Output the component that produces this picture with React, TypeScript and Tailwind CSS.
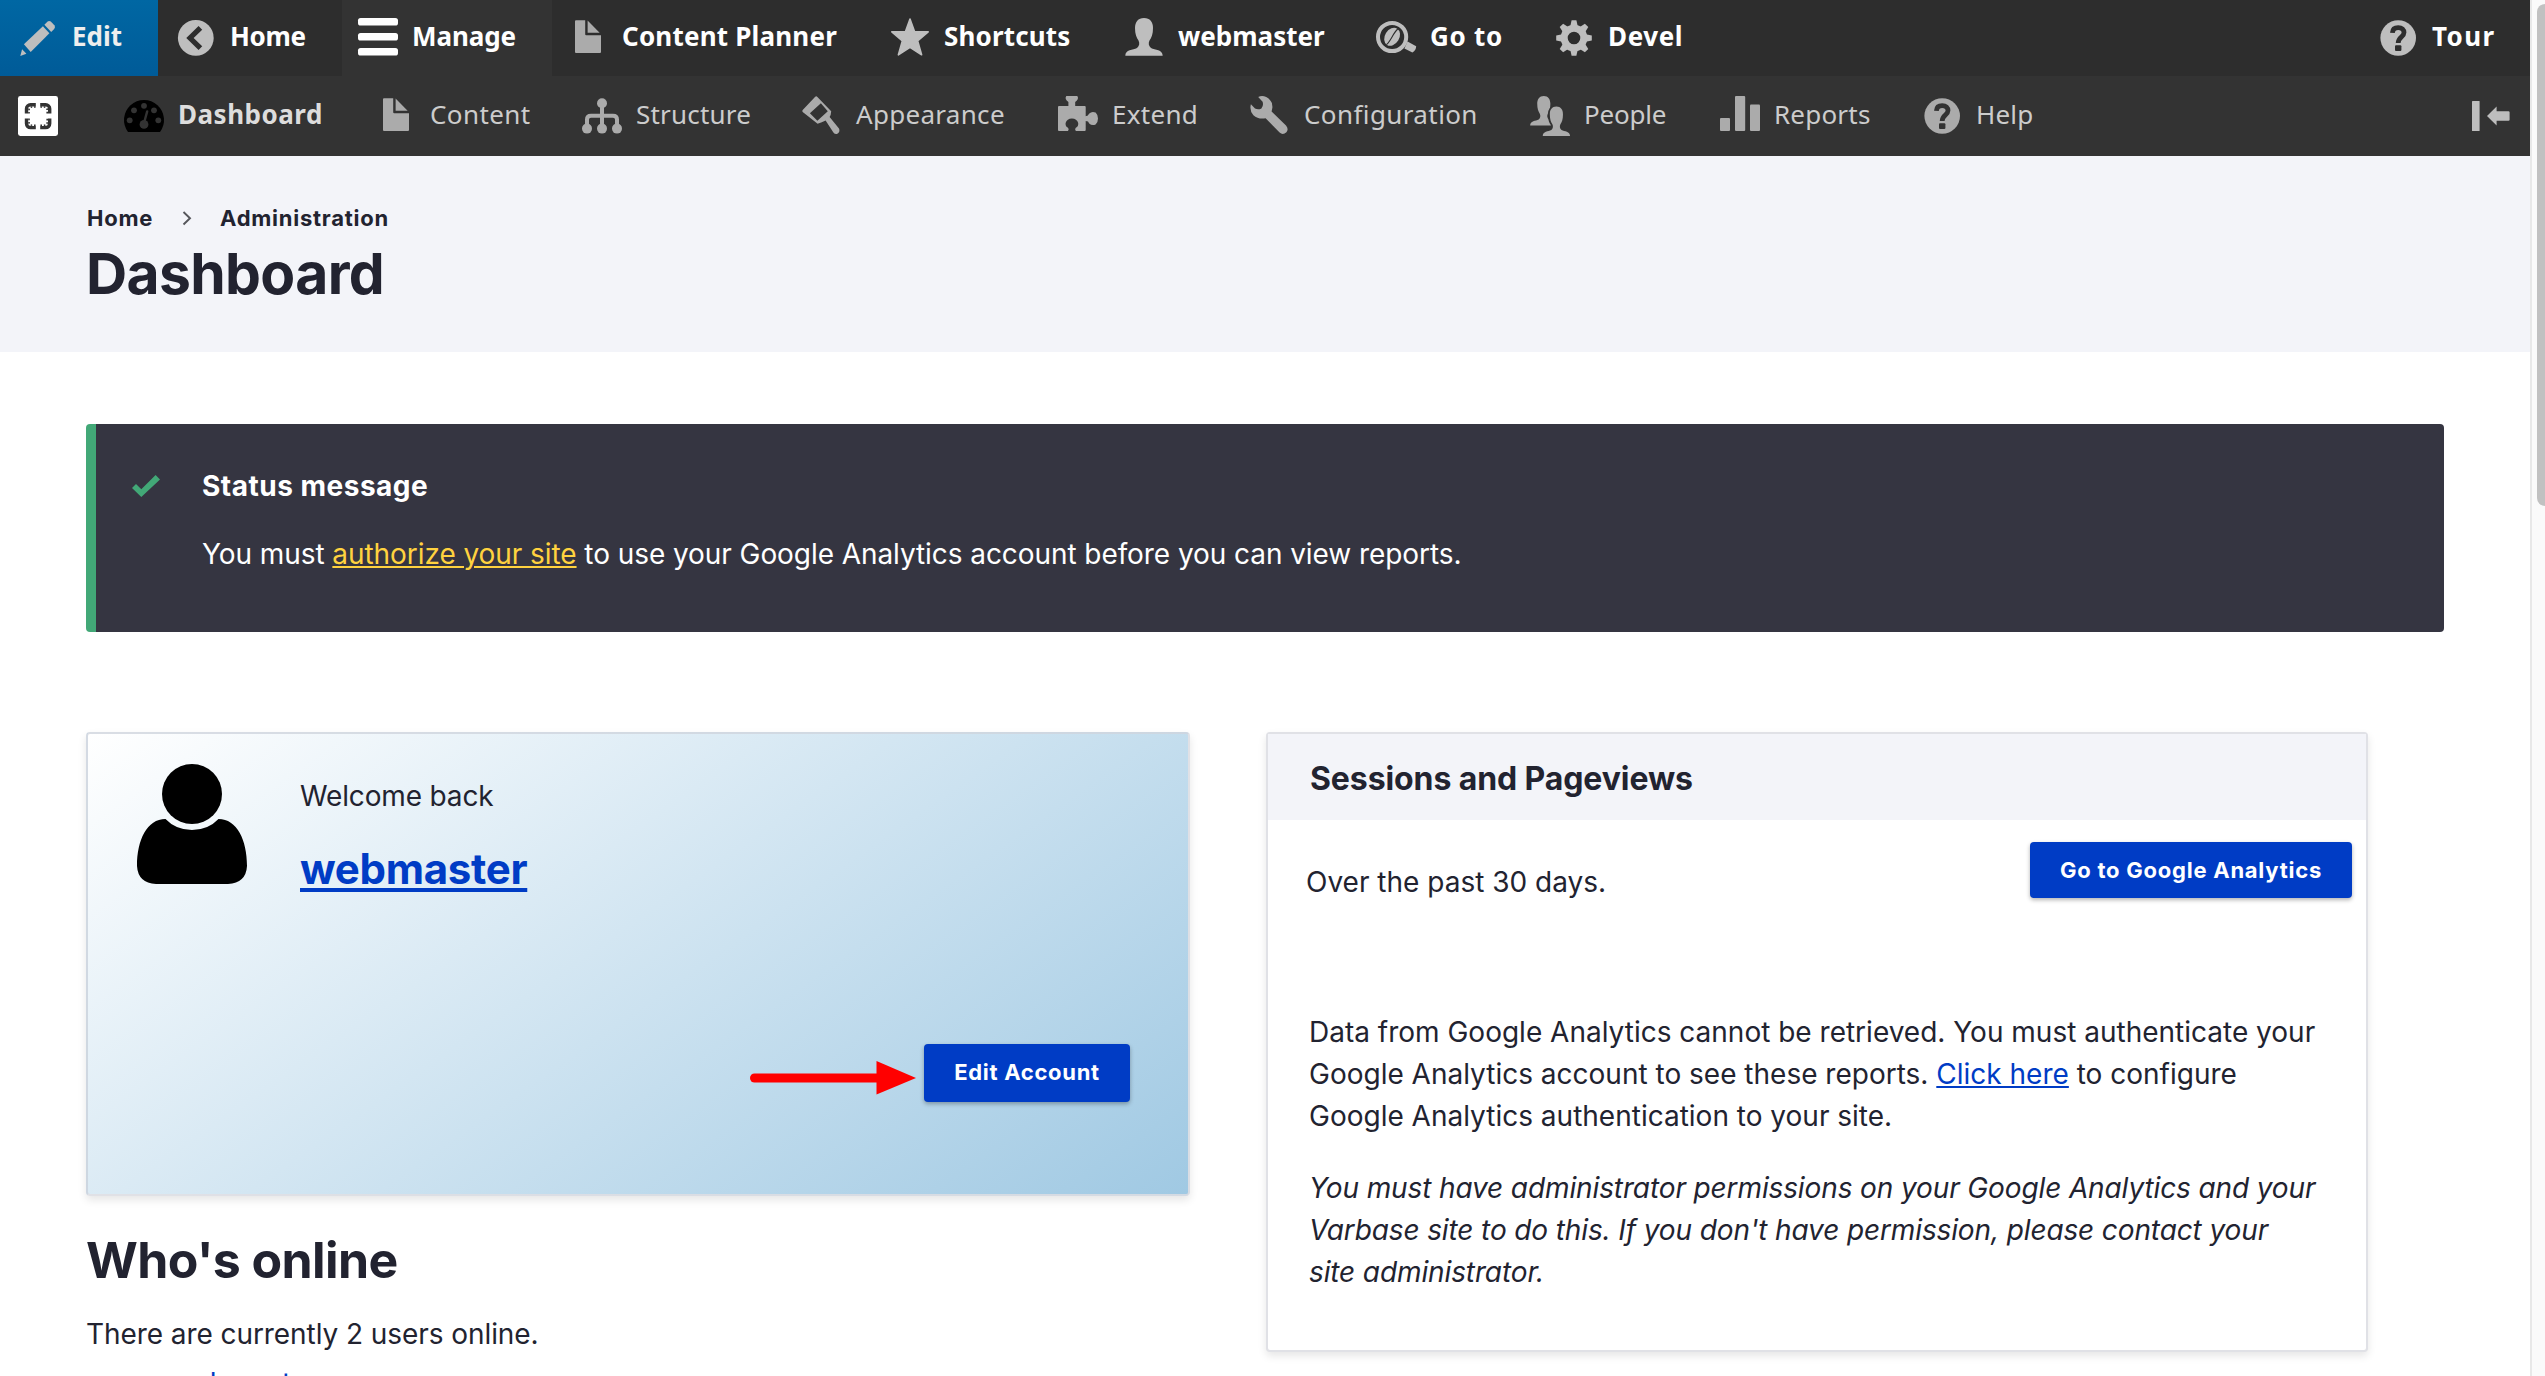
import type { ReactNode } from "react";

const PERSON =
  "M20 0C14 0 11 4 11 10C11 16 12.5 20 14.5 22.5C15.8 25 15.5 28 13 30C9 32 1.3 31.5 1.3 37.7H38.7C38.7 31.5 31 32 27 30C24.5 28 24.2 25 25.5 22.5C27.5 20 29 16 29 10C29 4 26 0 20 0Z";

function Icon({ children, className = "text-[#bebebe]" }: { children: ReactNode; className?: string }) {
  return (
    <svg viewBox="0 0 40 40" fill="currentColor" className={`h-10 w-10 shrink-0 overflow-visible ${className}`}>
      {children}
    </svg>
  );
}

const GRAY = "text-[#ababab]";

const Doc = ({ className = GRAY }: { className?: string }) => (
  <Icon className={className}>
    <path d="M8 2.3H17.2V16.3a1 1 0 0 0 1 1H33V34a1 1 0 0 1-1 1H8a1 1 0 0 1-1-1V3.3a1 1 0 0 1 1-1Z" />
    <path d="M19.6 2.6L31.6 14.7H19.6Z" />
  </Icon>
);

const Question = ({ className = "text-[#bebebe]", hole = "#2d2d2d" }: { className?: string; hole?: string }) => (
  <Icon className={className}>
    <circle cx="20.2" cy="20" r="17.8" />
    <path
      d="M14.4 14.8C14.6 11 17 9.6 20.2 9.6C24 9.6 26 11.8 26 14.6C26 19 20.2 19.4 20.2 25"
      fill="none"
      stroke={hole}
      strokeWidth="4.8"
    />
    <rect x="17" y="27.3" width="6.4" height="5.6" rx="1" fill={hole} />
  </Icon>
);

const Pencil = () => (
  <Icon>
    <path d="M2.3 37.9L4.1 31.3L8.4 35.7Z" />
    <path d="M5.9 26.3L24.9 8.2L31.4 15.2L12.7 33.9Z" />
    <path d="M26.4 6.8L29.4 3.8Q31 2.4 32.8 3.6L36.6 7.6Q37.6 9.2 36.2 11L33.2 13.9Z" />
  </Icon>
);

const Back = () => (
  <Icon>
    <circle cx="19.8" cy="19.9" r="17.9" />
    <path d="M24.4 9.8L14 20L24.4 30.2" fill="none" stroke="#2d2d2d" strokeWidth="5.2" />
  </Icon>
);

const Bars = () => (
  <Icon className="text-white">
    <rect y="0" width="40" height="7.6" rx="2.6" />
    <rect y="15" width="40" height="7.6" rx="2.6" />
    <rect y="30" width="40" height="7.6" rx="2.6" />
  </Icon>
);

const Star = () => (
  <Icon>
    <path
      d="M20 1L24.6 13.8H38.2L27.6 22.8L31.6 36.8L20 29.4L8.4 36.8L12.4 22.8L1.8 13.8H15.4Z"
      stroke="currentColor"
      strokeWidth="1.6"
      strokeLinejoin="round"
    />
  </Icon>
);

const Person = () => (
  <Icon>
    <path d={PERSON} />
  </Icon>
);

const GoTo = () => (
  <Icon>
    <circle cx="16.1" cy="19" r="14.1" fill="none" stroke="currentColor" strokeWidth="4" />
    <path d="M31.5 23.4L40.2 28.2Q40.2 32 36.4 34.6L28.4 30.4Z" />
    <ellipse cx="16.1" cy="18.8" rx="7.2" ry="9.6" transform="rotate(32 16.1 18.8)" />
    <path d="M10.4 26.6C15 23 17 15 21.8 11" fill="none" stroke="#2d2d2d" strokeWidth="1.1" />
  </Icon>
);

const Gear = () => (
  <Icon>
    <circle cx="20" cy="20" r="9.8" fill="none" stroke="currentColor" strokeWidth="7" />
    {[0, 45, 90, 135, 180, 225, 270, 315].map((a) => (
      <path key={a} d="M16 9.5L17.6 2.2H22.4L24 9.5Z" transform={`rotate(${a} 20 20)`} />
    ))}
  </Icon>
);

const Scan = () => (
  <Icon className="text-white">
    <rect width="40" height="40" rx="2.4" />
    <g fill="none" stroke="#333">
      <path
        strokeWidth="3.4"
        d="M17.8 8.7H12.5a4 4 0 0 0-4 4V17.6M22.2 8.7H27.7a4 4 0 0 1 4 4V17.6M17.8 31.6H12.5a4 4 0 0 1-4-4V22.6M22.2 31.6H27.7a4 4 0 0 0 4-4V22.6"
      />
      <path
        strokeWidth="1.6"
        strokeDasharray="1.6 1.8"
        d="M17.6 11H14a3 3 0 0 0-3 3V17.6M22.4 11H26.2a3 3 0 0 1 3 3V17.6M17.6 29.2H14a3 3 0 0 1-3-3V22.6M22.4 29.2H26.2a3 3 0 0 0 3-3V22.6"
      />
    </g>
  </Icon>
);

const Gauge = () => (
  <Icon className="text-black">
    <path d="M4 36A20 20 0 1 1 36 36Z" />
    <g fill="#333">
      <circle cx="20" cy="9.8" r="2.9" />
      <circle cx="10" cy="14.3" r="2.9" />
      <circle cx="30" cy="14.3" r="2.9" />
      <circle cx="5.7" cy="24.3" r="2.9" />
      <circle cx="34.3" cy="24.3" r="2.9" />
      <circle cx="20" cy="28.4" r="4.4" />
      <path d="M20 27L23.2 15.4" stroke="#333" strokeWidth="2.4" strokeLinecap="round" />
    </g>
  </Icon>
);

const Tree = () => (
  <Icon className={GRAY}>
    <path d="M20 8V32M5 32V23.5Q5 19.8 9 19.8H31Q35 19.8 35 23.5V32" fill="none" stroke="currentColor" strokeWidth="4" />
    <circle cx="20" cy="7.2" r="5" />
    <circle cx="5" cy="32.6" r="5" />
    <circle cx="20" cy="32.6" r="5" />
    <circle cx="35" cy="32.6" r="5" />
  </Icon>
);

const Brush = () => (
  <Icon className={GRAY}>
    <path
      fillRule="evenodd"
      d="M13.2.8Q14.3-.2 15.4.9L29.2 15.2Q29 19 27.6 21L37 32.6Q38.4 36 35.4 37.8Q33 38.6 31.4 36.4L23.6 24.4Q20 26.2 15.6 27.8L.7 15.9Q-.2 15 .7 14Z M18.9 7.2L7.9 17.2L15.4 24.8L25.8 15.2Z"
    />
  </Icon>
);

const Puzzle = () => (
  <Icon className={GRAY}>
    <path d="M8.3 0H19.3Q21.4 3.2 17.2 6V10H26.7Q27.7 10 27.7 11V20.2Q30.4 20.2 31 17.8Q34 14.8 37.6 16.6Q40 18.8 40 22.6Q40 26.6 37.6 28.4Q34 30 31.2 27.4Q30.6 25 27.7 25V34Q27.7 35 26.7 35H17.8Q16.4 33.4 17.8 31.8Q20.6 30.4 20.2 27Q18.8 22.6 13.9 22.5Q9 22.6 7.6 27Q7.2 30.4 10 31.8Q11.4 33.4 10 35H1Q0 35 0 34V11Q0 10 1 10H10.4V6Q6.2 3.2 8.3 0Z" />
  </Icon>
);

const Wrench = () => (
  <Icon className={GRAY}>
    <path d="M.9 8.3L5 12.6Q8.4 14.2 11.4 12.4Q13.8 9.4 12.6 5.8L8.2.9Q12-.8 16.2.9Q22.8 4.4 22.4 11.6L21.6 15.4L36 29.4Q39 33 36.4 36.2Q33 39.4 29.6 36.6L15.6 22.2Q8.4 23.6 3.4 19.2Q-.8 14.6.9 8.3Z" />
  </Icon>
);

const People = () => (
  <Icon className={GRAY}>
    <path d={PERSON} transform="translate(-.8 0) scale(.73 .785)" />
    <path d={PERSON} transform="translate(11.8 10.6) scale(.73 .78)" stroke="#333" strokeWidth="5" />
    <path d={PERSON} transform="translate(11.8 10.6) scale(.73 .78)" />
  </Icon>
);

const Chart = () => (
  <Icon className={GRAY}>
    <rect y="22" width="10" height="13" rx="1" />
    <rect x="15" width="10.2" height="35" rx="1" />
    <rect x="30" y="8.6" width="10" height="26.4" rx="1" />
  </Icon>
);

const topItems = [
  { label: "Edit", icon: <Pencil />, cls: "w-[158px] pl-[18px] bg-linear-to-b from-[#0067a3] to-[#005b98] text-[#eeeeee]", text: "" },
  { label: "Home", icon: <Back />, cls: "w-[184px] pl-[18px]", text: "-tracking-[0.3px]" },
  { label: "Manage", icon: <Bars />, cls: "w-[210px] pl-4 bg-[#333333]", text: "-tracking-[0.1px]" },
  { label: "Content Planner", icon: <Doc />, cls: "w-[320px] pl-4", text: "tracking-[0.2px]" },
  { label: "Shortcuts", icon: <Star />, cls: "w-[234px] pl-[18px]", text: "tracking-[0.15px]" },
  { label: "webmaster", icon: <Person />, cls: "w-[252px] pl-[18px]", text: "" },
  { label: "Go to", icon: <GoTo />, cls: "w-[178px] pl-[18px]", text: "tracking-[0.7px]" },
  { label: "Devel", icon: <Gear />, cls: "w-[170px] pl-[18px]", text: "tracking-[0.6px]" },
  { label: "Tour", icon: <Question />, cls: "ml-auto w-[170px] pl-[18px]", text: "tracking-[1.4px]" },
];

const trayItems = [
  { label: "Dashboard", icon: <Gauge />, cls: "w-[252px]", text: "font-bold text-[#dddddd] tracking-[0.5px]" },
  { label: "Content", icon: <Doc />, cls: "w-[206px]", text: "tracking-[0.4px]" },
  { label: "Structure", icon: <Tree />, cls: "w-[220px]", text: "tracking-[0.2px]" },
  { label: "Appearance", icon: <Brush />, cls: "w-[256px]", text: "tracking-[0.3px]" },
  { label: "Extend", icon: <Puzzle />, cls: "w-[192px]", text: "tracking-[0.3px]" },
  { label: "Configuration", icon: <Wrench />, cls: "w-[280px]", text: "tracking-[0.4px]" },
  { label: "People", icon: <People />, cls: "w-[190px]", text: "-tracking-[0.2px]" },
  { label: "Reports", icon: <Chart />, cls: "w-[202px]", text: "tracking-[0.2px]" },
  { label: "Help", icon: <Question className={GRAY} hole="#333333" />, cls: "w-[120px]", text: "tracking-[0.2px]" },
];

function Toolbar() {
  return (
    <nav className="font-['Noto_Sans',sans-serif] text-[26px]">
      <div className="flex h-[76px] bg-[#2d2d2d] font-bold text-white">
        {topItems.map((i) => (
          <a key={i.label} className={`flex h-full shrink-0 items-center ${i.cls}`}>
            {i.icon}
            <span className={`ml-[14px] pb-1 whitespace-nowrap ${i.text}`}>{i.label}</span>
          </a>
        ))}
      </div>
      <div className="flex h-20 items-center bg-[#333333] pr-[19px] pl-[18px] text-[#cccccc]">
        <Scan />
        <div className="ml-[66px] flex">
          {trayItems.map((i) => (
            <a key={i.label} className={`flex shrink-0 items-center ${i.cls}`}>
              {i.icon}
              <span className={`ml-[14px] pb-1 whitespace-nowrap ${i.text}`}>{i.label}</span>
            </a>
          ))}
        </div>
        <div className="ml-auto">
          <Icon>
            <rect x="1" y="5" width="7.6" height="30" rx="0.6" />
            <path d="M16 20L25.6 10.6V15.2H37.5Q38.6 15.2 38.6 16.2V23.8Q38.6 24.8 37.5 24.8H25.6V29.6Z" />
          </Icon>
        </div>
      </div>
    </nav>
  );
}

function Button({ children, className }: { children: ReactNode; className: string }) {
  return (
    <button
      className={`flex shrink-0 items-center justify-center rounded-[4px] bg-[#003cc5] text-[22px] font-bold whitespace-nowrap text-white shadow-[0_2px_4px_rgba(0,0,0,0.3)] ${className}`}
    >
      {children}
    </button>
  );
}

const CARD = "rounded-[4px] border-2 border-[rgba(216,217,224,0.8)] shadow-[0_4px_8px_rgba(0,0,0,0.1)]";

function WelcomeCard() {
  return (
    <section className={`flex h-[464px] flex-col bg-[linear-gradient(145deg,#ffffff,#a0c9e3)] ${CARD}`}>
      <div className="flex pt-[30px] pl-[49px]">
        <svg viewBox="0 0 110 120" className="h-[120px] w-[110px]">
          <circle cx="55" cy="30" r="30" />
          <path d="M28.5 55Q39 66 55 66Q71 66 81.500 55C100 55 110 76 110 102Q109 119 91 120H19Q1 119 0 102C0 76 10 55 28.5 55Z" />
        </svg>
        <div className="mt-[11px] ml-[53px]">
          <p className="leading-[42px] -tracking-[0.15px]">Welcome back</p>
          <a className="mt-6 block text-[42px] leading-[56px] font-bold -tracking-[0.3px] text-[#003cc5] underline decoration-4 underline-offset-4 [text-decoration-skip-ink:none]">
            webmaster
          </a>
        </div>
      </div>
      <div className="mt-auto mb-[92px] flex items-start justify-end pr-[58px]">
        <svg viewBox="0 0 166 34" className="mt-[17px] mr-2 h-[34px] w-[166px]">
          <path d="M4.500 17H130" stroke="#ff0000" strokeWidth="9" strokeLinecap="round" />
          <path d="M126.500 0L166 17L126.500 33.500Z" fill="#ff0000" />
        </svg>
        <Button className="h-[58px] w-[206px] pb-[2px] tracking-[0.7px]">Edit Account</Button>
      </div>
    </section>
  );
}

function AnalyticsCard() {
  return (
    <section className={`h-[620px] w-[1102px] bg-white ${CARD}`}>
      <h2 className="flex h-[86px] items-center bg-[#f3f4f9] pt-[3px] pl-[42px] text-[32px] font-bold -tracking-[0.1px]">
        Sessions and Pageviews
      </h2>
      <div className="mt-[22px] flex h-[61px] items-start justify-between pr-[14px] pl-[38px]">
        <p className="mt-[19px] leading-[42px]">Over the past 30 days.</p>
        <Button className="h-14 w-[322px] tracking-[0.75px]">Go to Google Analytics</Button>
      </div>
      <div className="mt-[108px] pl-[41px] leading-[42px] whitespace-nowrap">
        <p>
          Data from Google Analytics cannot be retrieved. You must authenticate your
          <br />
          Google Analytics account to see these reports.{" "}
          <a className="text-[#003cc5] underline decoration-2 underline-offset-2">Click here</a> to configure
          <br />
          Google Analytics authentication to your site.
        </p>
        <p className="mt-[30px] -tracking-[0.12px] italic">
          You must have administrator permissions on your Google Analytics and your
          <br />
          Varbase site to do this. If you don't have permission, please contact your
          <br />
          site administrator.
        </p>
      </div>
    </section>
  );
}

export default function App() {
  return (
    <div className="flex h-[1376px] w-[2545px] overflow-hidden bg-white font-['Inter',sans-serif] text-[28px] text-[#222330]">
      <div className="w-[2530px] shrink-0">
        <Toolbar />
        <header className="h-[196px] bg-[#f3f4f9] pt-[46px] pl-[86px]">
          <div className="flex h-8 items-center text-[22px] font-bold tracking-[0.75px]">
            <span className="w-[96px] pl-px">Home</span>
            <svg viewBox="0 0 10 16" className="h-4 w-[10px]">
              <path d="M1.500 2L8 8.200L1.500 14.500" fill="none" stroke="#55565b" strokeWidth="1.900" />
            </svg>
            <span className="ml-7">Administration</span>
          </div>
          <h1 className="mt-1 text-[57px] leading-[72px] font-bold -tracking-[0.65px]">Dashboard</h1>
        </header>
        <main className="pt-[72px] pl-[86px]">
          <div className="flex h-[208px] w-[2358px] rounded-[4px] border-l-10 border-[#42a877] bg-[#353541] pt-10 pl-9 text-white">
            <svg viewBox="0 0 28 22" className="mt-[11px] h-[22px] w-7">
              <path d="M0 13L4 9L9.300 14.300L23.600 0L28 4.400L9.300 22Z" fill="#42a877" />
            </svg>
            <div className="ml-[42px] leading-[44px]">
              <h2 className="font-bold tracking-[0.5px]">Status message</h2>
              <p className="mt-6 -tracking-[0.07px]">
                You must <a className="text-[#ffd23f] underline decoration-2 underline-offset-2">authorize your site</a> to use
                your Google Analytics account before you can view reports.
              </p>
            </div>
          </div>
          <div className="mt-[100px] flex items-start gap-[76px]">
            <div className="w-[1104px]">
              <WelcomeCard />
              <h2 className="mt-8 text-[50px] leading-[64px] font-bold -tracking-[0.6px]">Who's online</h2>
              <p className="mt-[21px] leading-[42px] -tracking-[0.07px]">There are currently 2 users online.</p>
              <ul className="mt-[7px] pl-[85px] leading-[42px]">
                <li>
                  <a className="text-[#003cc5] underline decoration-2 underline-offset-2">webmaster</a>
                </li>
              </ul>
            </div>
            <AnalyticsCard />
          </div>
        </main>
      </div>
      <div className="h-full w-[15px] shrink-0 overflow-hidden border-l-2 border-[#e8e8e8] bg-[#fafafa] pt-1 pl-[5px]">
        <div className="h-[502px] w-4 rounded-full bg-[#c1c1c1]" />
      </div>
    </div>
  );
}
